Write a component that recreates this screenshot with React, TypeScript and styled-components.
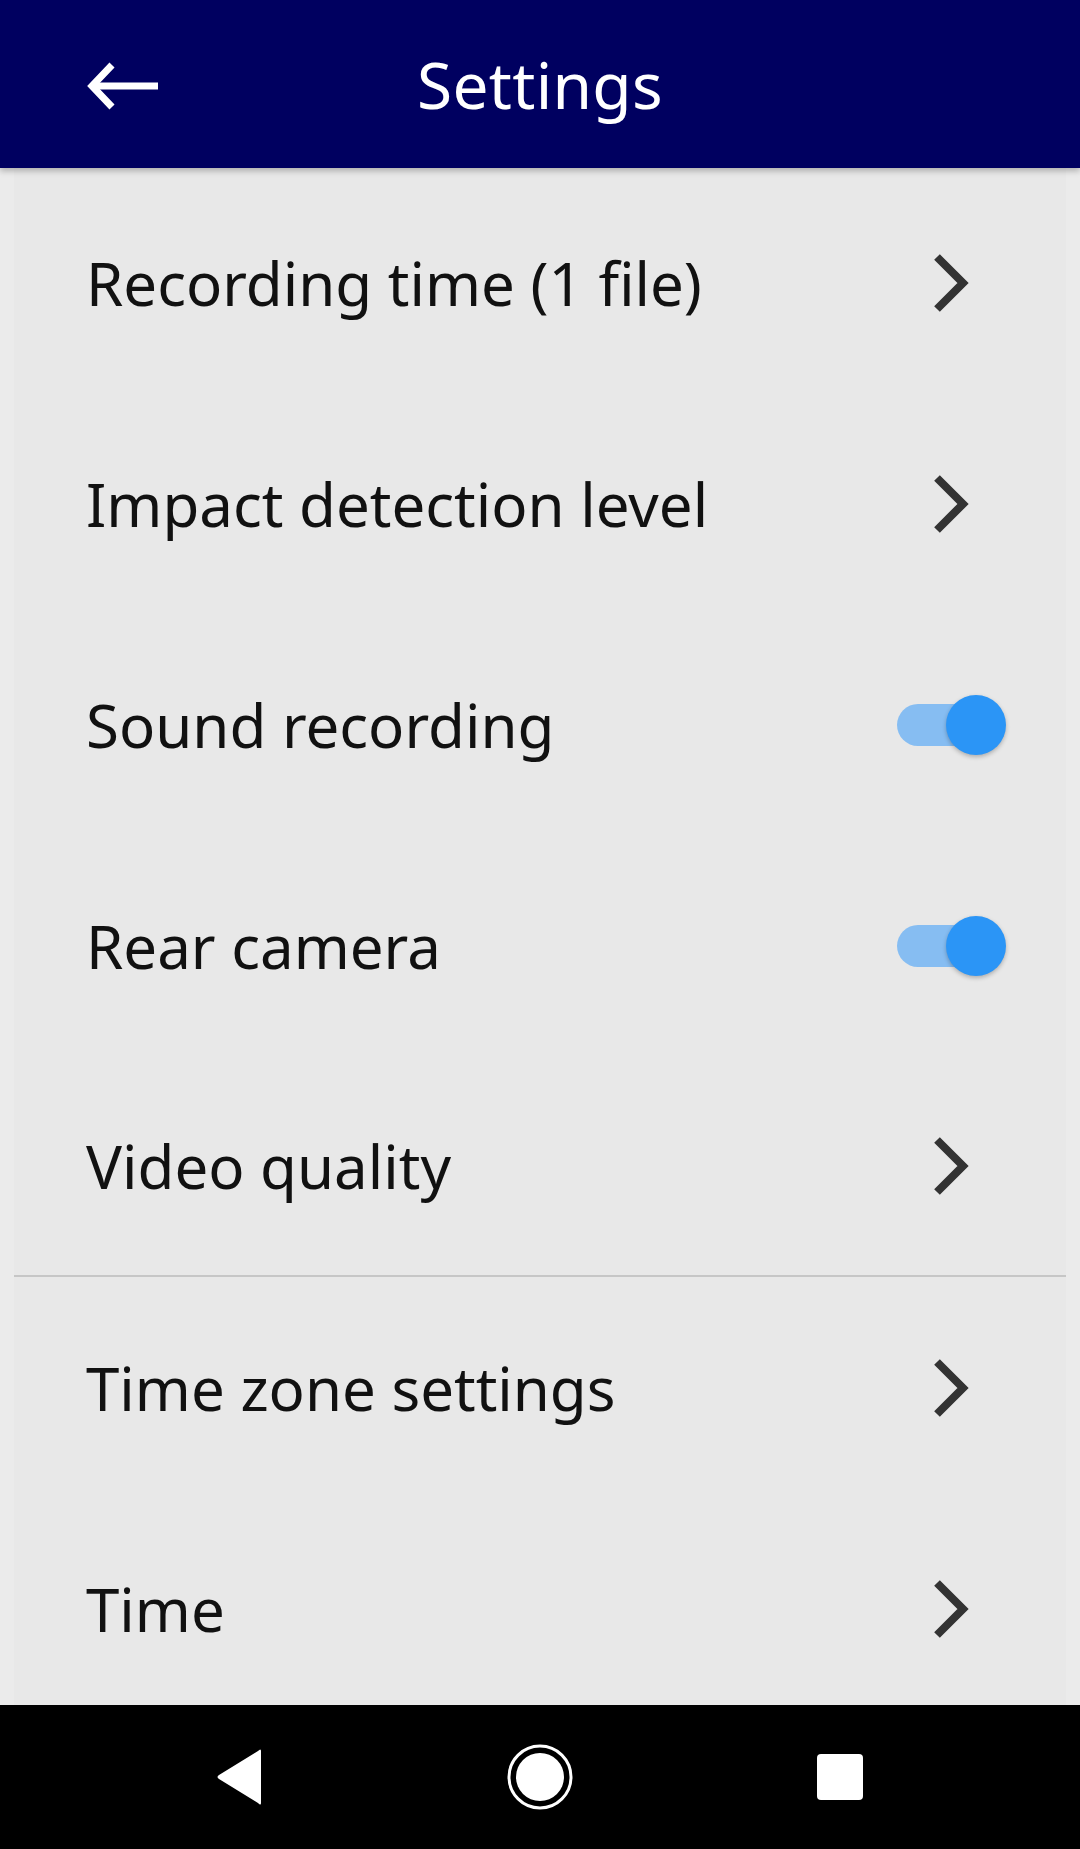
import styled, { createGlobalStyle } from "styled-components"

const GlobalStyle = createGlobalStyle`
  html, body {
    margin: 0;
    padding: 0;
    background: #ebebeb;
  }
  body {
    font-family: "Noto Sans", "Open Sans", sans-serif;
  }
`

type Item = {
  label: string
  kind: "link" | "toggle"
  on?: boolean
  divider?: boolean
}

const items: Item[] = [
  { label: "Recording time (1 file)", kind: "link" },
  { label: "Impact detection level", kind: "link" },
  { label: "Sound recording", kind: "toggle", on: true },
  { label: "Rear camera", kind: "toggle", on: true },
  { label: "Video quality", kind: "link", divider: true },
  { label: "Time zone settings", kind: "link" },
  { label: "Time", kind: "link" },
]

const Style = {
  Screen: styled.div`
    width: 1080px;
    height: 1849px;
    display: flex;
    flex-direction: column;
    overflow: hidden;
    background: #ebebeb;
  `,
  Header: styled.header`
    position: relative;
    z-index: 2;
    height: 168px;
    flex-shrink: 0;
    background: #000060;
    display: flex;
    align-items: center;
    justify-content: center;
    box-shadow: 0 3px 6px rgba(0, 0, 0, 0.25);
  `,
  BackButton: styled.div`
    position: absolute;
    left: 86px;
    top: 62px;
    width: 74px;
    height: 48px;
  `,
  Title: styled.h1`
    margin: 0;
    color: #ffffff;
    font-size: 64px;
    font-weight: 400;
    letter-spacing: 0.3px;
  `,
  List: styled.div`
    flex: 1;
    margin: 0 14px;
    padding-top: 4px;
    background: #e8e8e8;
    overflow: hidden;
  `,
  Row: styled.div<{ $divider?: boolean }>`
    height: 221px;
    box-sizing: border-box;
    display: flex;
    align-items: center;
    justify-content: space-between;
    padding: 0 60px 0 72px;
    border-bottom: ${(p) => (p.$divider ? "2px solid #c6c6c6" : "none")};
  `,
  Label: styled.span`
    color: #111111;
    font-size: 60px;
    font-weight: 400;
  `,
  Chevron: styled.svg`
    width: 40px;
    height: 62px;
    margin-right: 34px;
  `,
  Toggle: styled.div`
    position: relative;
    width: 110px;
    height: 62px;
    margin-right: -1px;
  `,
  Track: styled.div<{ $on?: boolean }>`
    position: absolute;
    left: 0;
    top: 10px;
    width: 94px;
    height: 42px;
    border-radius: 21px;
    background: ${(p) => (p.$on ? "#86bdf2" : "#b9b9b9")};
  `,
  Thumb: styled.div<{ $on?: boolean }>`
    position: absolute;
    top: 1px;
    left: ${(p) => (p.$on ? "49px" : "0")};
    width: 60px;
    height: 60px;
    border-radius: 50%;
    background: ${(p) => (p.$on ? "#2b95f6" : "#f5f5f5")};
    box-shadow: 0 2px 4px rgba(0, 0, 0, 0.25);
  `,
  NavBar: styled.nav`
    height: 144px;
    flex-shrink: 0;
    background: #000000;
    display: flex;
    align-items: center;
    justify-content: center;
  `,
  NavSlot: styled.div`
    width: 300px;
    display: flex;
    justify-content: center;
    align-items: center;
  `,
}

function Chevron() {
  return (
    <Style.Chevron viewBox="0 0 40 62">
      <polyline
        points="5,5 31,31 5,57"
        fill="none"
        stroke="#333333"
        strokeWidth="8"
      />
    </Style.Chevron>
  )
}

function Toggle({ on }: { on?: boolean }) {
  return (
    <Style.Toggle>
      <Style.Track $on={on} />
      <Style.Thumb $on={on} />
    </Style.Toggle>
  )
}

export default function App() {
  return (
    <>
      <GlobalStyle />
      <Style.Screen>
        <Style.Header>
          <Style.BackButton>
            <svg width="74" height="48" viewBox="0 0 74 48">
              <line x1="8" y1="24" x2="72" y2="24" stroke="#fff" strokeWidth="7" />
              <polyline
                points="26,3 6,24 26,45"
                fill="none"
                stroke="#fff"
                strokeWidth="7"
              />
            </svg>
          </Style.BackButton>
          <Style.Title>Settings</Style.Title>
        </Style.Header>

        <Style.List>
          {items.map((item) => (
            <Style.Row key={item.label} $divider={item.divider}>
              <Style.Label>{item.label}</Style.Label>
              {item.kind === "link" ? <Chevron /> : <Toggle on={item.on} />}
            </Style.Row>
          ))}
        </Style.List>

        <Style.NavBar>
          <Style.NavSlot>
            <svg width="50" height="58" viewBox="0 0 50 58">
              <path
                d="M46 3 L46 55 Q46 58 43 55 L4 31 Q1 29 4 27 L43 3 Q46 0 46 3 Z"
                fill="#fff"
              />
            </svg>
          </Style.NavSlot>
          <Style.NavSlot>
            <svg width="66" height="66" viewBox="0 0 66 66">
              <circle cx="33" cy="33" r="31" fill="none" stroke="#fff" strokeWidth="3" />
              <circle cx="33" cy="33" r="24" fill="#fff" />
            </svg>
          </Style.NavSlot>
          <Style.NavSlot>
            <svg width="46" height="46" viewBox="0 0 46 46">
              <rect x="0" y="0" width="46" height="46" rx="4" fill="#fff" />
            </svg>
          </Style.NavSlot>
        </Style.NavBar>
      </Style.Screen>
    </>
  )
}
